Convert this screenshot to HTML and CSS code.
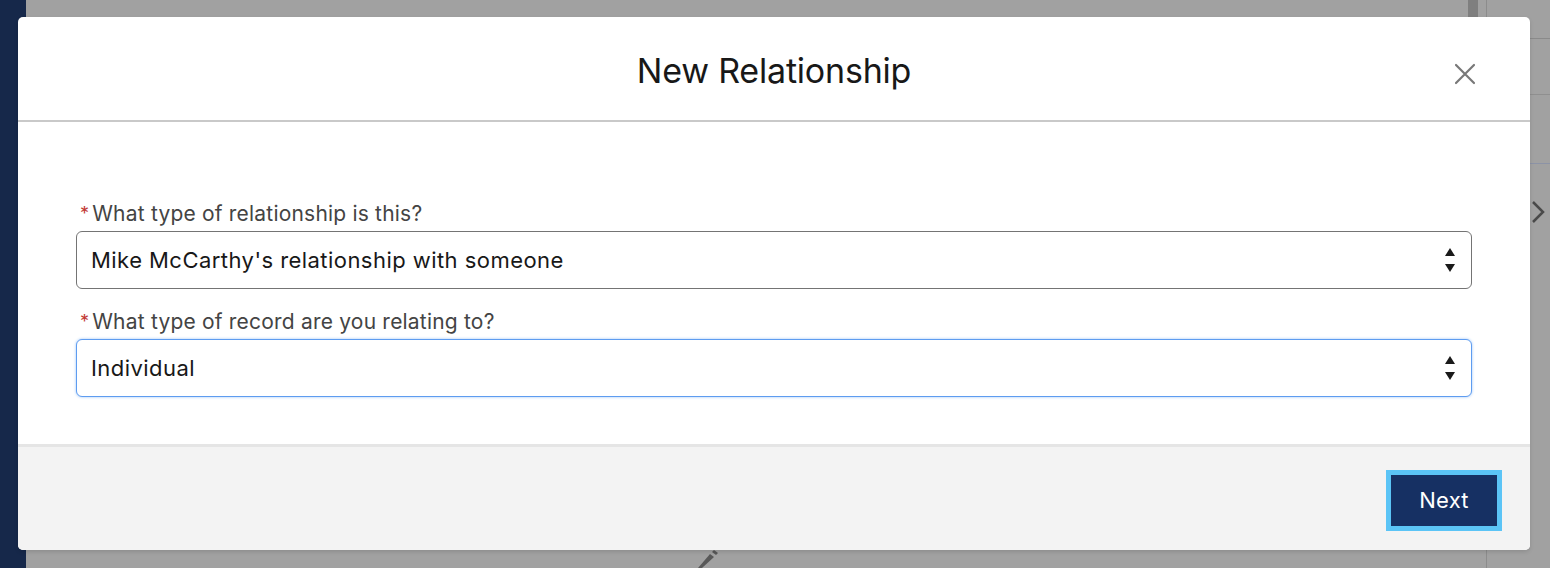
FILE: index.html
```html
<!DOCTYPE html>
<html lang="en">
<head>
<meta charset="utf-8">
<title>New Relationship</title>
<link rel="stylesheet" href="styles.css">
</head>
<body>
<div class="page">
  <div class="nav"></div>
  <div class="main">
    <div class="scrollthumb"></div>
    <svg class="pencil" width="30" height="20" viewBox="0 0 30 20"><path d="M4 20 L16 6 L20 9 L8 20 Z" fill="#585858"/><path d="M18 4 L20 2 L24 5 L22 7 Z" fill="#585858"/></svg>
  </div>
  <div class="side">
    <div class="side-row r1"></div>
    <div class="side-row r2"></div>
    <div class="side-row r3"></div>
    <svg class="chev" width="14" height="24" viewBox="0 0 14 24"><path d="M2 2 L12 12 L2 22" fill="none" stroke="#4a4a4a" stroke-width="2.5"/></svg>
  </div>
</div>

<div class="modal">
  <header class="modal-header">
    <h2 class="modal-title">New Relationship</h2>
    <button class="close" aria-label="Close">
      <svg width="22" height="22" viewBox="0 0 22 22"><path d="M2 2 L20 20 M20 2 L2 20" stroke="#787878" stroke-width="2.2" stroke-linecap="round"/></svg>
    </button>
  </header>
  <div class="modal-body">
    <div class="field">
      <label class="label"><span class="req">*</span>What type of relationship is this?</label>
      <div class="select">
        <span class="value">Mike McCarthy's relationship with someone</span>
        <svg class="arrows" width="12" height="28" viewBox="0 0 12 28"><path d="M6 2 L11 10 L1 10 Z M1 18 L11 18 L6 26 Z" fill="#1a1a1a"/></svg>
      </div>
    </div>
    <div class="field">
      <label class="label"><span class="req">*</span>What type of record are you relating to?</label>
      <div class="select focus">
        <span class="value">Individual</span>
        <svg class="arrows" width="12" height="28" viewBox="0 0 12 28"><path d="M6 2 L11 10 L1 10 Z M1 18 L11 18 L6 26 Z" fill="#1a1a1a"/></svg>
      </div>
    </div>
  </div>
  <footer class="modal-footer">
    <button class="btn-next">Next</button>
  </footer>
</div>
</body>
</html>
```

FILE: styles.css
```css
* { box-sizing: border-box; }
html, body { margin: 0; padding: 0; }
body {
  width: 1550px;
  height: 568px;
  overflow: hidden;
  font-family: "Inter", "Noto Sans", sans-serif;
  background: #a1a1a1;
  position: relative;
}
.page {
  display: flex;
  height: 568px;
}
.nav {
  width: 26px;
  background: #16284a;
}
.main {
  flex: 1;
  position: relative;
  background: #a1a1a1;
}
.scrollthumb {
  position: absolute;
  left: 1442px;
  top: 0;
  width: 10px;
  height: 17px;
  background: #7f7f7f;
}
.pencil {
  position: absolute;
  left: 668px;
  top: 548px;
}
.side {
  width: 64px;
  border-left: 1px solid #8c8c8c;
  background: #a1a1a1;
  position: relative;
}
.side-row { position: absolute; left: 0; right: 0; height: 1px; }
.r1 { top: 38px; background: #8a8a8a; }
.r2 { top: 94px; background: #8f8f8f; }
.r3 { top: 163px; background: #8c93a6; }
.chev { position: absolute; left: 44px; top: 200px; }

.modal {
  position: absolute;
  left: 18px;
  top: 17px;
  width: 1512px;
  height: 533px;
  background: #fff;
  border-radius: 5px;
  overflow: hidden;
  display: flex;
  flex-direction: column;
  box-shadow: 0 2px 4px rgba(0,0,0,0.12);
}
.modal-header {
  height: 105px;
  border-bottom: 2px solid #c9c9c9;
  display: flex;
  align-items: center;
  justify-content: center;
  position: relative;
  padding-top: 4px;
}
.modal-title {
  margin: 0;
  font-size: 34px;
  font-weight: 400;
  color: #181818;
  letter-spacing: -0.2px;
}
.close {
  position: absolute;
  right: 54px;
  top: 46px;
  width: 22px;
  height: 22px;
  padding: 0;
  border: 0;
  background: none;
  display: flex;
}
.modal-body {
  height: 325px;
  padding: 81px 58px 0 58px;
  display: flex;
  flex-direction: column;
  gap: 22px;
  border-bottom: 3px solid #e5e5e5;
}
.field {
  display: flex;
  flex-direction: column;
  gap: 6px;
}
.label {
  display: flex;
  align-items: center;
  font-size: 21px;
  line-height: 22px;
  letter-spacing: 0.2px;
  color: #444;
  padding-left: 4px;
}
.req {
  color: #c23934;
  font-size: 18px;
  margin-right: 3px;
}
.select {
  height: 58px;
  border: 1px solid #747474;
  border-radius: 6px;
  display: flex;
  align-items: center;
  justify-content: space-between;
  padding: 0 15px 0 14px;
  background: #fff;
}
.select.focus {
  border-color: #5e9cf0;
  box-shadow: 0 0 3px #9cc4f7;
}
.value {
  font-size: 22px;
  letter-spacing: 0.45px;
  color: #181818;
}
.arrows { display: block; }
.modal-footer {
  flex: 1;
  background: #f3f3f3;
  display: flex;
  align-items: center;
  justify-content: flex-end;
  padding-right: 33px;
  padding-top: 3px;
}
.btn-next {
  width: 106px;
  height: 51px;
  background: #163063;
  color: #fff;
  border: 0;
  font-family: "Inter", "Noto Sans", sans-serif;
  font-size: 22px;
  letter-spacing: 0.3px;
  box-shadow: 0 0 0 5px #5bc4f6;
}
```
